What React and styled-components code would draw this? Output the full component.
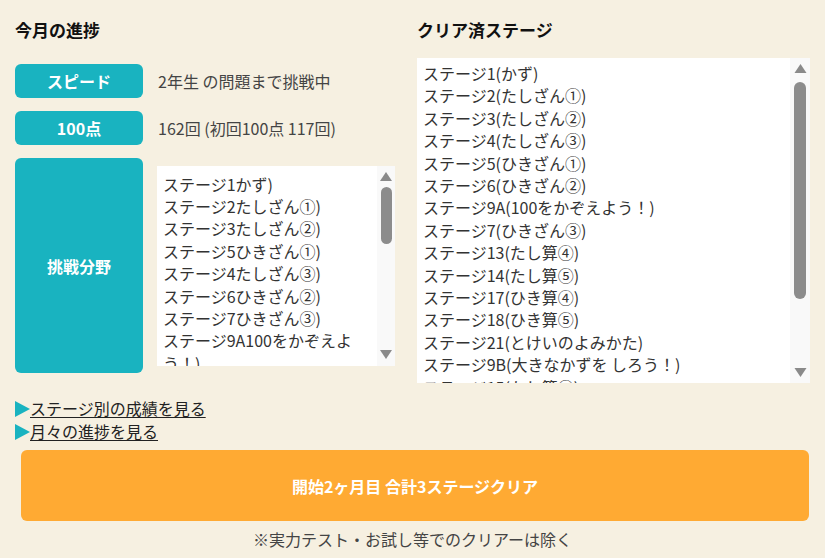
import React from "react";
import styled, { createGlobalStyle } from "styled-components";

const Global = createGlobalStyle`
  html, body { margin: 0; padding: 0; background: #f6f0e1; }
  body { font-family: "Noto Sans CJK JP", "Noto Sans", sans-serif; color: #3a3a3a; }
  * { box-sizing: border-box; }
`;

const Page = styled.div`
  width: 825px;
  height: 558px;
  padding: 18px 15px 0;
  overflow: hidden;
`;

const Columns = styled.div`
  display: grid;
  grid-template-columns: 380px 395px;
  column-gap: 22px;
  align-items: start;
`;

const Column = styled.div`
  display: flex;
  flex-direction: column;
`;

const Heading = styled.h2`
  margin: 0 0 ${(p) => p.$gap}px;
  font-size: 17px;
  line-height: 24px;
  font-weight: 700;
  color: #111;
`;

const Rows = styled.div`
  display: flex;
  flex-direction: column;
  gap: 13px;
`;

const Row = styled.div`
  display: flex;
  align-items: center;
  gap: ${(p) => p.$gap}px;
`;

const Label = styled.div`
  flex: 0 0 128px;
  height: ${(p) => p.$h}px;
  background: #19b3c0;
  border-radius: 6px;
  color: #fff;
  font-weight: 700;
  font-size: 16px;
  display: flex;
  align-items: center;
  justify-content: center;
`;

const Value = styled.div`
  font-size: 16px;
  line-height: 22px;
  color: #444;
`;

const ListBox = styled.div`
  display: flex;
  width: ${(p) => p.$w}px;
  height: ${(p) => p.$h}px;
  background: #fff;
  overflow: hidden;
`;

const ListItems = styled.ul`
  flex: 1;
  list-style: none;
  margin: 0;
  padding: ${(p) => p.$pt}px 6px 0 6px;
  overflow: hidden;
  font-size: 16px;
  line-height: 22.4px;
  color: #333;
`;

const Track = styled.div`
  flex: 0 0 ${(p) => p.$w}px;
  background: #f9f9f9;
  display: flex;
  flex-direction: column;
  align-items: center;
  padding: ${(p) => p.$pt}px 0 ${(p) => p.$pb}px;
`;

const Thumb = styled.div`
  width: ${(p) => p.$w}px;
  height: ${(p) => p.$h}px;
  margin-top: ${(p) => p.$mt}px;
  background: #8c8c8c;
  border-radius: 6px;
`;

const Spacer = styled.div`
  flex: 1;
`;

const Arrow = ({ down, w = 12 }) => (
  <svg width={w} height="9" viewBox="0 0 12 9" style={{ display: "block" }}>
    {down ? (
      <polygon points="0,0 12,0 6,9" fill="#8a8a8a" />
    ) : (
      <polygon points="6,0 12,9 0,9" fill="#8a8a8a" />
    )}
  </svg>
);

const Scrollbar = ({ w, pt, pb, thumbTop, thumbH, thumbW }) => (
  <Track $w={w} $pt={pt} $pb={pb}>
    <Arrow w={thumbW + 1} />
    <Thumb $w={thumbW} $h={thumbH} $mt={thumbTop} />
    <Spacer />
    <Arrow down w={thumbW + 1} />
  </Track>
);

const Links = styled.div`
  margin-top: 14px;
  display: flex;
  flex-direction: column;
`;

const LinkRow = styled.a`
  display: flex;
  align-items: center;
  font-size: 16px;
  line-height: 23px;
  color: #222;
  text-decoration: underline;
  text-underline-offset: 2px;
  width: max-content;
`;

const Tri = () => (
  <svg width="15" height="16" viewBox="0 0 15 16" style={{ display: "block" }}>
    <polygon points="0,0 15,8 0,16" fill="#19b3c0" />
  </svg>
);

const Banner = styled.div`
  margin: 7px 1px 0 6px;
  height: 71px;
  background: #ffaa33;
  border-radius: 6px;
  color: #fff;
  font-size: 16px;
  font-weight: 700;
  display: flex;
  align-items: center;
  justify-content: center;
`;

const Note = styled.p`
  margin: 7px 0 0;
  text-align: center;
  font-size: 16px;
  line-height: 22px;
  color: #444;
`;

const leftItems = [
  "ステージ1かず)",
  "ステージ2たしざん①)",
  "ステージ3たしざん②)",
  "ステージ5ひきざん①)",
  "ステージ4たしざん③)",
  "ステージ6ひきざん②)",
  "ステージ7ひきざん③)",
  "ステージ9A100をかぞえよう！)",
  "ステージ13たし算④)",
];

const rightItems = [
  "ステージ1(かず)",
  "ステージ2(たしざん①)",
  "ステージ3(たしざん②)",
  "ステージ4(たしざん③)",
  "ステージ5(ひきざん①)",
  "ステージ6(ひきざん②)",
  "ステージ9A(100をかぞえよう！)",
  "ステージ7(ひきざん③)",
  "ステージ13(たし算④)",
  "ステージ14(たし算⑤)",
  "ステージ17(ひき算④)",
  "ステージ18(ひき算⑤)",
  "ステージ21(とけいのよみかた)",
  "ステージ9B(大きなかずを しろう！)",
  "ステージ15(たし算⑥)",
  "ステージ16(たし算⑦)",
  "ステージ19(ひき算⑥)",
];

export default function App() {
  return (
    <>
      <Global />
      <Page>
        <Columns>
          <Column>
            <Heading $gap={22}>今月の進捗</Heading>
            <Rows>
              <Row $gap={15}>
                <Label $h={34}>スピード</Label>
                <Value>2年生 の問題まで挑戦中</Value>
              </Row>
              <Row $gap={15}>
                <Label $h={34}>100点</Label>
                <Value>162回 (初回100点 117回)</Value>
              </Row>
              <Row $gap={14}>
                <Label $h={215}>挑戦分野</Label>
                <ListBox $w={238} $h={200}>
                  <ListItems $pt={7}>
                    {leftItems.map((t) => (
                      <li key={t}>{t}</li>
                    ))}
                  </ListItems>
                  <Scrollbar w={18} pt={6} pb={7} thumbTop={6} thumbH={57} thumbW={11} />
                </ListBox>
              </Row>
            </Rows>
          </Column>
          <Column>
            <Heading $gap={16}>クリア済ステージ</Heading>
            <ListBox $w={393} $h={325}>
              <ListItems $pt={4}>
                {rightItems.map((t) => (
                  <li key={t}>{t}</li>
                ))}
              </ListItems>
              <Scrollbar w={20} pt={6} pb={6} thumbTop={9} thumbH={217} thumbW={12} />
            </ListBox>
          </Column>
        </Columns>
        <Links>
          <LinkRow href="#">
            <Tri />
            ステージ別の成績を見る
          </LinkRow>
          <LinkRow href="#">
            <Tri />
            月々の進捗を見る
          </LinkRow>
        </Links>
        <Banner>開始2ヶ月目 合計3ステージクリア</Banner>
        <Note>※実力テスト・お試し等でのクリアーは除く</Note>
      </Page>
    </>
  );
}
